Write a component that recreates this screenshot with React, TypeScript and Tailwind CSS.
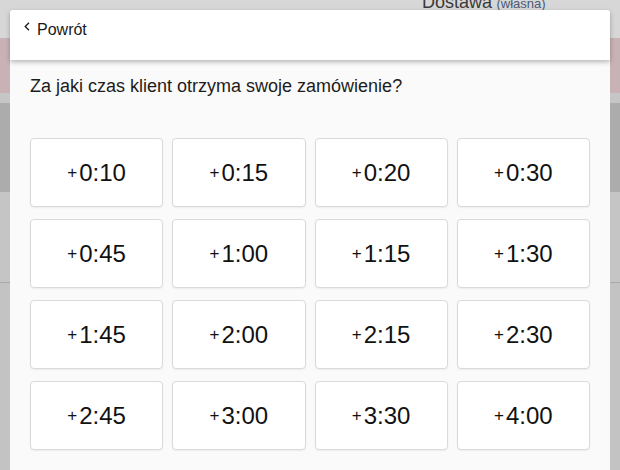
const times = [
  '0:10', '0:15', '0:20', '0:30',
  '0:45', '1:00', '1:15', '1:30',
  '1:45', '2:00', '2:15', '2:30',
  '2:45', '3:00', '3:30', '4:00',
];

function Background() {
  return (
    <div className="flex flex-col h-[470px]">
      <div className="h-[38px] bg-[#d7d7d7] relative overflow-hidden">
        <div className="absolute left-[422px] -top-[11px] whitespace-nowrap">
          <span className="text-[18px] text-[#3a3a3a]">Dostawa</span>{' '}
          <span className="text-[13px] text-[#4a5a7a]">(własna)</span>
        </div>
      </div>
      <div className="h-[55px] bg-[#c9b2b6]" />
      <div className="h-[10px] bg-[#c6c6c6]" />
      <div className="h-[89px] bg-[#acacac]" />
      <div className="h-[91px] bg-[#c5c5c5] border-b border-[#a9a9a9]" />
      <div className="flex-1 bg-[#c3c3c3]" />
    </div>
  );
}

export default function App() {
  return (
    <div className="relative w-[620px] h-[470px] overflow-hidden font-['Liberation_Sans',Arial,sans-serif]">
      <Background />

      {/* Modal */}
      <div className="absolute left-[10px] top-[10px] w-[600px] h-[480px] bg-[#fafafa] rounded-t-[3px] flex flex-col">
        <div className="h-[50px] bg-white rounded-t-[3px] shadow-[0_2px_5px_rgba(0,0,0,0.28)] relative z-10 pl-[14px] pt-[10px]">
          <button className="flex items-start gap-[7px] text-[16px] text-[#1a1a1a]">
            <svg width="6" height="9" viewBox="0 0 6 9" className="mt-[2px]">
              <polyline points="5,0.8 1.2,4.5 5,8.2" fill="none" stroke="#1a1a1a" strokeWidth="1.3" />
            </svg>
            <span className="leading-[20px]">Powrót</span>
          </button>
        </div>

        <div className="px-[20px] pt-[15px]">
          <p className="text-[18px] leading-[22px] text-[#1c1c1c]">
            Za jaki czas klient otrzyma swoje zamówienie?
          </p>

          <div className="grid grid-cols-4 gap-x-[9px] gap-y-[12px] mt-[41px]">
            {times.map((t) => (
              <button
                key={t}
                className="h-[69px] bg-white border border-[#dadada] rounded-[4px] shadow-[0_1px_2px_rgba(0,0,0,0.06)] flex items-center justify-center text-[#111]"
              >
                <span className="text-[17px] mr-[2px] leading-none">+</span>
                <span className="text-[24px] leading-none">{t}</span>
              </button>
            ))}
          </div>
        </div>
      </div>
    </div>
  );
}
